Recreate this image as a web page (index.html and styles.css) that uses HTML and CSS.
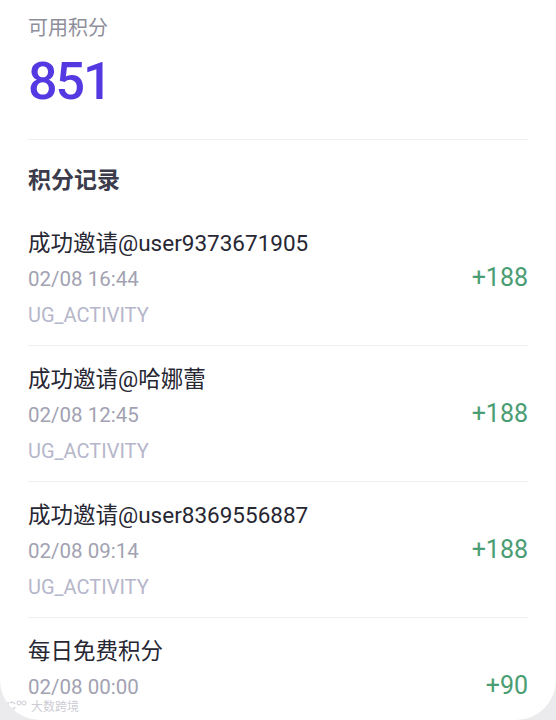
FILE: index.html
```html
<!DOCTYPE html>
<html lang="zh-CN">
<head>
    <meta charset="UTF-8">
    <title>积分</title>
    <link rel="stylesheet" href="styles.css">
</head>
<body>
<div class="screen">
    <div class="summary">
        <div class="summary-label">可用积分</div>
        <div class="summary-value">851</div>
    </div>

    <h4 class="section-title">积分记录</h4>

    <ul class="records">
        <li class="record">
            <div class="record-title">成功邀请@user9373671905</div>
            <div class="record-row">
                <span class="record-time">02/08 16:44</span>
                <span class="record-amount">+188</span>
            </div>
            <div class="record-source">UG_ACTIVITY</div>
        </li>
        <li class="record">
            <div class="record-title">成功邀请@哈娜蕾</div>
            <div class="record-row">
                <span class="record-time">02/08 12:45</span>
                <span class="record-amount">+188</span>
            </div>
            <div class="record-source">UG_ACTIVITY</div>
        </li>
        <li class="record">
            <div class="record-title">成功邀请@user8369556887</div>
            <div class="record-row">
                <span class="record-time">02/08 09:14</span>
                <span class="record-amount">+188</span>
            </div>
            <div class="record-source">UG_ACTIVITY</div>
        </li>
        <li class="record">
            <div class="record-title">每日免费积分</div>
            <div class="record-row">
                <span class="record-time">02/08 00:00</span>
                <span class="record-amount">+90</span>
            </div>
        </li>
    </ul>

    <div class="watermark">
        <svg width="22" height="11" viewBox="0 0 22 11">
            <path d="M2 2v8M4 3q3-2 5 1M4 8q3 3 5-1" fill="none" stroke="currentColor" stroke-width="1.2"/>
            <circle cx="13" cy="3" r="2" fill="none" stroke="currentColor"/>
            <circle cx="18" cy="3" r="2" fill="none" stroke="currentColor"/>
        </svg>
        <span>大数跨境</span>
    </div>
</div>
</body>
</html>
```

FILE: styles.css
```css
* {
    box-sizing: border-box;
    font-family: Roboto, "Noto Sans CJK SC", sans-serif;
}
body {
    margin: 0;
    background: #ebebed;
}
.screen {
    position: relative;
    height: 720px;
    overflow: hidden;
    padding: 0 28px;
    background: #fff;
    border-radius: 0 0 40px 40px;
}

.summary {
    padding-top: 14px;
    padding-bottom: 27px;
    border-bottom: 1px solid #efeff5;
}
.summary-label {
    font-size: 20px;
    line-height: 28px;
    color: #8e8e9b;
}
.summary-value {
    margin-top: 10px;
    font-size: 52px;
    line-height: 60px;
    font-weight: 500;
    letter-spacing: -2px;
    color: #5439e2;
}

.section-title {
    margin: 25px 0 15px;
    font-size: 23px;
    line-height: 32px;
    font-weight: 700;
    color: #3b3b4b;
}

.records {
    list-style: none;
    margin: 0;
    padding: 0;
}
.record {
    padding: 15px 0 12px;
    border-top: 1px solid #efeff5;
}
.record:first-child {
    border-top: 0;
    padding-top: 13px;
}
.record-title {
    font-size: 22.5px;
    line-height: 36px;
    color: #272733;
}
.record-row {
    display: flex;
    justify-content: space-between;
    align-items: center;
    height: 36px;
}
.record-time {
    font-size: 20.5px;
    color: #a2a2b2;
}
.record-amount {
    margin-top: -4px;
    font-size: 25px;
    color: #4a9d73;
}
.record-source {
    font-size: 20px;
    line-height: 36px;
    color: #b6b6cb;
}

.watermark {
    position: absolute;
    left: 6px;
    bottom: 6px;
    display: flex;
    align-items: center;
    gap: 3px;
    color: rgba(190, 190, 200, 0.8);
    font-size: 12px;
}
```
